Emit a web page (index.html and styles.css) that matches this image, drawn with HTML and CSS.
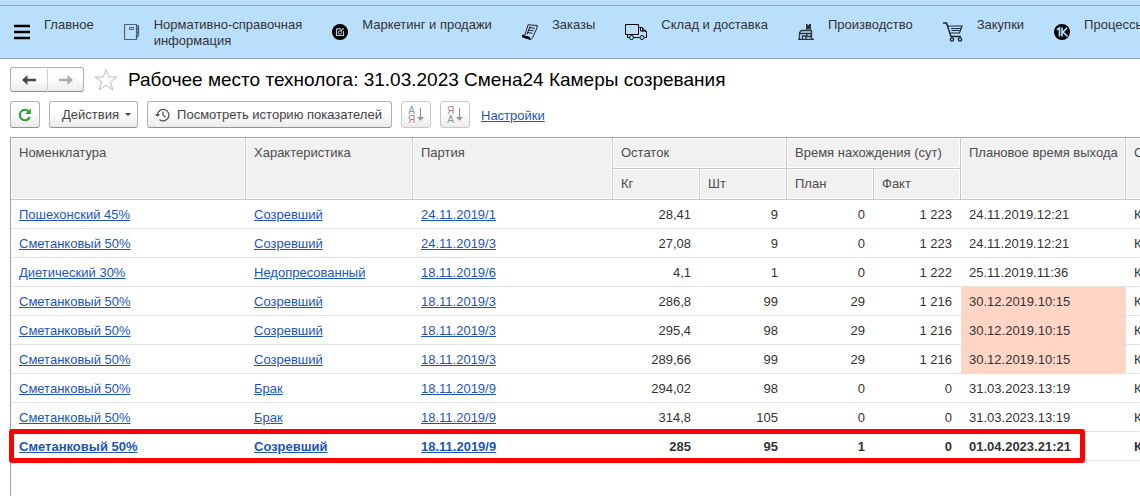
FILE: index.html
```html
<!DOCTYPE html>
<html lang="ru">
<head>
<meta charset="utf-8">
<title>Рабочее место технолога</title>
<link rel="stylesheet" href="styles.css">
</head>
<body>
<nav class="sections">
  <a class="section" href="#"><svg class="icon" width="16" height="16" viewBox="0 0 16 16"><path d="M0 2h16M0 8h16M0 14h16" stroke="#000" stroke-width="2.4"/></svg><span class="label">Главное</span></a>
  <a class="section" href="#"><svg class="icon" width="16" height="16" viewBox="0 0 16 16" fill="none" stroke="#4b6378"><path d="M1 .5h11.500v15H1M.5 0v16" stroke-width="1.200"/><path d="M5.500 3.500h4v2h-4z"/><path d="M13 2h1.500v2.500H13M13 5.500h1.500V8H13M13 9h1.500v2.500H13M12.500 13h1.500" stroke-width="1.300"/></svg><span class="label">Нормативно-справочная<br>информация</span></a>
  <a class="section" href="#"><svg class="icon" width="16" height="16" viewBox="0 0 16 16"><circle cx="8" cy="8" r="8"/><path d="M4.500 4.800h4.500M4.500 4.800v6.700h7V7" fill="none" stroke="#b9cfe2" stroke-width="1.200"/><circle cx="7.800" cy="8.500" r="1.600" fill="none" stroke="#b9cfe2"/><path d="M9 7l2.500-2.700" stroke="#b9cfe2" stroke-width="1.300"/></svg><span class="label">Маркетинг и продажи</span></a>
  <a class="section" href="#"><svg class="icon" width="16" height="16" viewBox="0 0 16 16"><path d="M6 .8 15.400 1.500 14.500 5 10.500 14 8.500 15.500.5 13V11.200L3 10.800z" fill="none" stroke="#222"/><path d="M.5 11l7 1.700 1.500 2.600-1 .5L.3 13z"/><path d="M7.300 3.500l5.500.8M6.300 6l5.300.8M5.300 8.500l5.200.8M8 2.500l-3 8" stroke="#222" fill="none"/></svg><span class="label">Заказы</span></a>
  <a class="section" href="#"><svg class="icon" width="22" height="16" viewBox="0 0 22 16" fill="none" stroke="#000"><path d="M4 13.500H2.500v-3H.5V.5h13v10H2.500M13.500 3.500h4l3 4h1v6h-2M8.500 13.500h6M15.500 4v3h3M17.500 4v3h3v-1"/><circle cx="6.500" cy="13.500" r="2"/><circle cx="17" cy="13.500" r="2"/></svg><span class="label">Склад и доставка</span></a>
  <a class="section" href="#"><svg class="icon" width="16" height="16" viewBox="0 0 16 16" fill="none" stroke="#29343d" stroke-width="1.300"><path d="M1.500 15V8.500L3.500 6.500h10V15M0 15.300h16M2 9.500h12M4.500 15v-3h3.500v3M9 10v2.500h4V10"/><path d="M8 0h1.500v1H11V0h2v5.500H8z" fill="#29343d" stroke="none"/></svg><span class="label">Производство</span></a>
  <a class="section" href="#"><svg class="icon" width="20" height="20" viewBox="0 0 20 20" fill="none" stroke="#1c252c"><path d="M0 1h3.500l4.500 13.500h10" stroke-width="1.500"/><path d="M5 4h14l-2.500 7H7.500M8 6.500h9.500M8.500 8.500h8" stroke-width="1.200"/><circle cx="9" cy="17.500" r="1.600" stroke-width="1.400"/><circle cx="17" cy="17.500" r="1.600" stroke-width="1.400"/></svg><span class="label">Закупки</span></a>
  <a class="section" href="#"><svg class="icon" width="16" height="16" viewBox="0 0 16 16"><circle cx="8" cy="8" r="8"/><path d="M2.800 5.800 5.500 4v8.500M8 3.500v9M13 3.800 9 8l4.500 4.500" fill="none" stroke="#badffc" stroke-width="1.700"/></svg><span class="label">Процессы</span></a>
</nav>
<main class="page">
  <header class="heading">
    <div class="history">
      <button class="btn step" aria-label="Назад"><svg width="14" height="10" viewBox="0 0 14 10"><path d="M0 5 5.500 0v3.700H14v2.600H5.500V10z" fill="#4a4a4a"/></svg></button>
      <button class="btn step" aria-label="Вперед"><svg width="14" height="10" viewBox="0 0 14 10"><path d="M14 5 8.500 0v3.700H0v2.600h8.500V10z" fill="#a9a9a9"/></svg></button>
    </div>
    <svg class="star" width="24" height="24" viewBox="0 0 24 24"><path d="M12 1.500 14.700 9H23l-6.700 5 2.600 8L12 17.200 5.100 22l2.600-8L1 9h8.300z" fill="none" stroke="#b4bcc4"/></svg>
    <h1 class="title">Рабочее место технолога: 31.03.2023 Смена24 Камеры созревания</h1>
  </header>
  <div class="toolbar">
    <button class="btn square" aria-label="Обновить"><svg width="14" height="14" viewBox="0 0 14 14"><path d="M11.800 9A5.200 5.200 0 1 1 10.500 3.200" fill="none" stroke="#2a9d2e" stroke-width="2"/><path d="M12.800.5V6H7.300z" fill="#2a9d2e"/></svg></button>
    <button class="btn actions">Действия<svg width="6" height="3" viewBox="0 0 6 3"><path d="M0 0h6L3 3z" fill="#444"/></svg></button>
    <button class="btn log"><svg width="15" height="14" viewBox="0 0 15 14" fill="none" stroke="#555" stroke-width="1.300"><path d="M2.500 8V6.500a5.700 5.700 0 1 1 2 5M8 3.500V7.300l2.500 2"/><path d="M0 6h5L2.500 9z" fill="#555" stroke="none"/></svg>Посмотреть историю показателей</button>
    <button class="btn square dim" aria-label="По возрастанию"><span class="letters"><span class="cool">А</span><span class="warm">Я</span></span><svg width="7" height="13" viewBox="0 0 7 13"><path d="M3.500 0v10" stroke="#999" stroke-width="1.300"/><path d="M0 9h7l-3.500 4z" fill="#999"/></svg></button>
    <button class="btn square dim" aria-label="По убыванию"><span class="letters"><span class="warm">Я</span><span class="cool">А</span></span><svg width="7" height="13" viewBox="0 0 7 13"><path d="M3.500 0v10" stroke="#999" stroke-width="1.300"/><path d="M0 9h7l-3.500 4z" fill="#999"/></svg></button>
    <a class="link" href="#">Настройки</a>
  </div>
  <div class="sheet">
    <table class="grid">
      <colgroup><col class="c-name"><col class="c-kind"><col class="c-batch"><col class="c-num"><col class="c-num"><col class="c-num"><col class="c-num"><col class="c-time"><col class="c-rest"></colgroup>
      <thead>
        <tr><th rowspan="2">Номенклатура</th><th rowspan="2">Характеристика</th><th rowspan="2">Партия</th><th colspan="2">Остаток</th><th colspan="2">Время нахождения (сут)</th><th rowspan="2">Плановое время выхода</th><th rowspan="2">Склад</th></tr>
        <tr><th>Кг</th><th>Шт</th><th>План</th><th>Факт</th></tr>
      </thead>
      <tbody>
        <tr><td><a href="#">Пошехонский 45%</a></td><td><a href="#">Созревший</a></td><td><a href="#">24.11.2019/1</a></td><td class="num">28,41</td><td class="num">9</td><td class="num">0</td><td class="num">1 223</td><td>24.11.2019.12:21</td><td>Камера</td></tr>
        <tr><td><a href="#">Сметанковый 50%</a></td><td><a href="#">Созревший</a></td><td><a href="#">24.11.2019/3</a></td><td class="num">27,08</td><td class="num">9</td><td class="num">0</td><td class="num">1 223</td><td>24.11.2019.12:21</td><td>Камера</td></tr>
        <tr><td><a href="#">Диетический 30%</a></td><td><a href="#">Недопресованный</a></td><td><a href="#">18.11.2019/6</a></td><td class="num">4,1</td><td class="num">1</td><td class="num">0</td><td class="num">1 222</td><td>25.11.2019.11:36</td><td>Камера</td></tr>
        <tr><td><a href="#">Сметанковый 50%</a></td><td><a href="#">Созревший</a></td><td><a href="#">18.11.2019/3</a></td><td class="num">286,8</td><td class="num">99</td><td class="num">29</td><td class="num">1 216</td><td class="late">30.12.2019.10:15</td><td>Камера</td></tr>
        <tr><td><a href="#">Сметанковый 50%</a></td><td><a href="#">Созревший</a></td><td><a href="#">18.11.2019/3</a></td><td class="num">295,4</td><td class="num">98</td><td class="num">29</td><td class="num">1 216</td><td class="late">30.12.2019.10:15</td><td>Камера</td></tr>
        <tr><td><a href="#">Сметанковый 50%</a></td><td><a href="#">Созревший</a></td><td><a href="#">18.11.2019/3</a></td><td class="num">289,66</td><td class="num">99</td><td class="num">29</td><td class="num">1 216</td><td class="late">30.12.2019.10:15</td><td>Камера</td></tr>
        <tr><td><a href="#">Сметанковый 50%</a></td><td><a href="#">Брак</a></td><td><a href="#">18.11.2019/9</a></td><td class="num">294,02</td><td class="num">98</td><td class="num">0</td><td class="num">0</td><td>31.03.2023.13:19</td><td>Камера</td></tr>
        <tr><td><a href="#">Сметанковый 50%</a></td><td><a href="#">Брак</a></td><td><a href="#">18.11.2019/9</a></td><td class="num">314,8</td><td class="num">105</td><td class="num">0</td><td class="num">0</td><td>31.03.2023.13:19</td><td>Камера</td></tr>
        <tr class="current"><td><a href="#">Сметанковый 50%</a></td><td><a href="#">Созревший</a></td><td><a href="#">18.11.2019/9</a></td><td class="num">285</td><td class="num">95</td><td class="num">1</td><td class="num">0</td><td>01.04.2023.21:21</td><td>Камера</td></tr>
      </tbody>
    </table>
    <div class="marker"></div>
  </div>
</main>
</body>
</html>
```

FILE: styles.css
```css
* { box-sizing: border-box; }

body {
  margin: 0;
  min-height: 100vh;
  display: flex;
  flex-direction: column;
  overflow: hidden;
  background: #fff;
  color: #333;
  font: 13px/16px "Liberation Sans", Arial, sans-serif;
}

/* Section bar */
.sections {
  display: flex;
  height: 59px;
  padding-left: 14px;
  gap: 30px;
  border-top: 5px solid #badffc;
  border-bottom: 1px solid #8ba9c6;
  background: #badffc;
  box-shadow: inset 0 1px #8ba9c6;
  white-space: nowrap;
}
.section {
  display: flex;
  flex: none;
  gap: 14px;
  color: #333;
  text-decoration: none;
}
.icon { align-self: center; flex: none; }
.label { padding-top: 12px; }

.page {
  flex: 1;
  display: flex;
  flex-direction: column;
  padding: 8px 0 0 10px;
}

/* Title row */
.heading { display: flex; align-items: center; height: 25px; }
.history { display: flex; }
.star { margin: 0 10px 0 10px; }
.title {
  margin: 0;
  color: #000;
  font-size: 19px;
  line-height: 24px;
  font-weight: normal;
  white-space: nowrap;
}

/* Buttons */
.btn {
  display: flex;
  align-items: center;
  justify-content: center;
  height: 27px;
  padding: 0;
  border: 1px solid #b0b0b0;
  border-bottom-color: #919191;
  border-radius: 3px;
  background: linear-gradient(#fff 40%, #ebebeb);
  color: #444;
  font: inherit;
  white-space: nowrap;
}
.step { width: 37px; height: 25px; }
.step:first-child { border-radius: 3px 0 0 3px; width: 38px; border-right-color: #d0d0d0; }
.step:last-child { border-left: 0; border-radius: 0 3px 3px 0; width: 36px; }

.toolbar { display: flex; align-items: center; margin: 9px 0; }
.square { width: 30px; }
.actions { width: 89px; margin: 0 9px; padding-left: 6px; gap: 6px; }
.log { width: 245px; gap: 7px; padding-right: 2px; }
.dim { margin-left: 9px; gap: 2px; border-color: #c8c8c8; }
.letters { display: flex; flex-direction: column; font-size: 10px; line-height: 9px; }
.cool { color: #8494a6; }
.warm { color: #ac8080; }
.link { margin-left: 11px; padding-top: 2px; color: #1d55b5; }

/* Data table */
.sheet {
  position: relative;
  flex: 1;
  border: solid #a0a0a0;
  border-width: 1px 0 0 1px;
}
.grid {
  width: 1194px;
  table-layout: fixed;
  border-collapse: separate;
  border-spacing: 0;
}
.c-name { width: 235px; }
.c-kind { width: 167px; }
.c-batch { width: 200px; }
.c-num { width: 87px; }
.c-time { width: 165px; }
.c-rest { width: 79px; }
.grid th {
  height: 31px;
  padding: 7px 8px;
  border: solid #c8c8c8;
  border-width: 0 1px 1px 0;
  background: #f1f1f1;
  box-shadow: inset 0 0 0 1px #fff;
  color: #4d4d4d;
  font-weight: normal;
  text-align: left;
  vertical-align: top;
  white-space: nowrap;
}
.grid td {
  height: 29px;
  padding: 2px 8px 0;
  border-bottom: 1px solid #e2e2e2;
  white-space: nowrap;
}
.grid a { color: #1d55b5; }
.grid .num { padding-right: 9px; text-align: right; }
.grid .late { border-bottom-color: #ffd5c5; background: #ffd5c5; }
.current { font-weight: bold; }

/* Frame drawn over the current row */
.marker {
  position: absolute;
  top: 291px;
  left: -2px;
  width: 1076px;
  height: 34px;
  border: 5px solid #f00;
  border-radius: 3px;
}
```
